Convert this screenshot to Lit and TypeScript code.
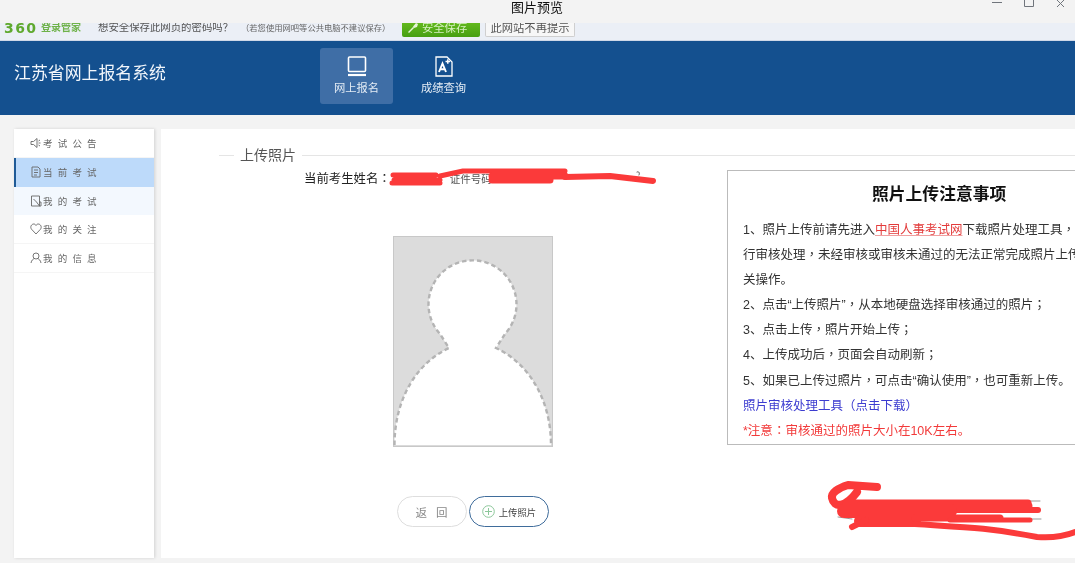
import { LitElement, html, css, svg } from "lit";
import { customElement } from "lit/decorators.js";

const menu = [
  { label: "考试公告", cls: "", icon: svg`<path d="M1 4.500h2.500L7 1.500v9L3.500 7.500H1z"/><path d="M8.500 4l1.500-1M8.500 6h2M8.500 8l1.500 1"/>` },
  { label: "当前考试", cls: "active", icon: svg`<path d="M2 1h6l2 2v8H2z"/><path d="M4 4h4M4 6.500h4M4 9h3"/>` },
  { label: "我的考试", cls: "soft", icon: svg`<path d="M1.500 1h8v10h-8z"/><path d="M3.500 4l3 3M6.500 7l3 4M9 7h2v4H9"/>` },
  { label: "我的关注", cls: "", icon: svg`<path d="M6 11 1.500 6.200C-.2 3.900 1.500 1 3.800 1 5 1 5.600 1.800 6 2.500 6.400 1.800 7 1 8.200 1c2.300 0 4 2.900 2.300 5.200z"/>` },
  { label: "我的信息", cls: "", icon: svg`<circle cx="6" cy="4" r="3"/><path d="M1 11c.5-2.800 2-4 3.500-4.400M11 11c-.5-2.800-2-4-3.500-4.400"/>` },
];

/* The reference sets these full-width marks in the middle of their cell, as the TC face does. */
const pn = (text: string) =>
  text.split(/([，；：])/).map((part) =>
    /^[，；：]$/.test(part) ? html`<span class="mid">${part}</span>` : part
  );

@customElement("app-root")
export class AppRoot extends LitElement {
  static styles = css`
    :host {
      display: block;
      position: relative;
      width: 1075px;
      height: 563px;
      overflow: hidden;
      background: #f3f3f3;
      font-family: "Liberation Sans", "Noto Sans CJK SC", sans-serif;
      color: #333;
      filter: blur(0.35px);
    }
    .titlebar {
      height: 23px;
      background: #f3f3f3;
      position: relative;
      z-index: 1;
      display: flex;
      justify-content: center;
    }
    .titlebar .t {
      font-size: 13px;
      line-height: 15px;
      color: #111;
      margin-left: -1px;
    }
    .winbtns {
      position: absolute;
      right: 9px;
      top: 0;
    }
    .savebar {
      height: 18px;
      box-sizing: border-box;
      background: #ebeff6;
      border-bottom: 1px solid #cfd8e8;
      display: flex;
      align-items: flex-start;
      padding-left: 4px;
      white-space: nowrap;
    }
    .logo360 {
      font-family: "DejaVu Sans", sans-serif;
      font-weight: 700;
      font-size: 14px;
      line-height: 10px;
      letter-spacing: 1.4px;
      color: #5fa92f;
      width: 32px;
      margin-right: 5px;
    }
    .logotxt {
      font-size: 10px;
      line-height: 10px;
      font-weight: 700;
      color: #6fb24a;
      width: 40px;
    }
    .q {
      font-size: 10.4px;
      line-height: 10px;
      color: #555;
      margin-left: 17px;
      width: 135px;
    }
    .hint {
      font-size: 8.3px;
      line-height: 10px;
      color: #666;
      margin-left: 8px;
      width: 161px;
    }
    .btn-save {
      width: 78px;
      height: 14px;
      box-sizing: border-box;
      background: linear-gradient(#62b81c, #479f12);
      border-radius: 0 0 2px 2px;
      color: #d6f0c0;
      font-size: 11.3px;
      line-height: 10px;
      display: flex;
      align-items: flex-start;
      gap: 3px;
      padding-left: 5px;
    }
    .btn-save svg { margin-top: -1px; }
    .btn-never {
      margin-left: 5px;
      width: 90px;
      height: 14px;
      box-sizing: border-box;
      background: #f7f7f7;
      border: 1px solid #cfcfcf;
      border-top: 0;
      border-radius: 0 0 2px 2px;
      color: #555;
      font-size: 11.3px;
      line-height: 10px;
      text-align: center;
    }
    .header {
      height: 74px;
      background: #14508f;
      display: flex;
      align-items: center;
      color: #fff;
    }
    .brand {
      font-size: 16.9px;
      line-height: 20px;
      margin-left: 14px;
      width: 306px;
      margin-top: -8px;
      color: #f2f6fb;
    }
    .navs {
      display: flex;
      gap: 2px;
      margin-top: -4px;
    }
    .nav {
      width: 73px;
      height: 56px;
      border-radius: 3px;
      display: flex;
      flex-direction: column;
      align-items: center;
      gap: 4px;
      padding-top: 8px;
      box-sizing: border-box;
      font-size: 11.3px;
      line-height: 14px;
      color: #e4ecf5;
    }
    .nav.on { background: #3f6ea6; }
    .nav.second { margin-left: 12px; }
    .body {
      display: flex;
      gap: 7px;
      padding: 14px 0 0 14px;
      height: 429px;
    }
    .side {
      width: 140px;
      height: 429px;
      flex: none;
      background: #fff;
      box-shadow: 1px 0 3px rgba(0, 0, 0, 0.14);
    }
    .item {
      height: 28.8px;
      box-sizing: border-box;
      border-bottom: 1px solid #f5f5f5;
      display: flex;
      align-items: center;
      padding-left: 16px;
      color: #666;
      font-size: 9.5px;
      letter-spacing: 5.2px;
      gap: 1px;
    }
    .item svg {
      fill: none;
      stroke: #666;
      stroke-width: 0.9;
      flex: none;
    }
    .item.active {
      background: #bddafa;
      border-left: 2px solid #1f5a96;
      border-bottom: 0;
      padding-left: 14px;
    }
    .item.soft { background: #f3f8fe; border-bottom: 0; }
    .main {
      flex: 1;
      min-width: 0;
      height: 429px;
      background: #fff;
      overflow: hidden;
    }
    .legend {
      display: flex;
      align-items: center;
      margin: 18px 0 0 58px;
      height: 16px;
      gap: 6px;
      font-size: 14px;
      line-height: 16px;
      color: #555;
    }
    .legend i { display: block; height: 1px; background: #e5e5e5; }
    .legend i.a { width: 15px; }
    .legend i.b { flex: 1; }
    .cols {
      display: flex;
      margin-top: 7px;
    }
    .left {
      width: 566px;
      flex: none;
    }
    .who {
      display: flex;
      white-space: nowrap;
      padding-left: 143px;
      font-size: 12.4px;
      line-height: 16px;
      color: #222;
      margin-top: 1px;
    }
    .who .cert { margin-left: 59px; font-size: 10.5px; color: #555; }
    .photo {
      display: block;
      margin: 49px 0 0 232px;
      width: 160px;
      height: 211px;
    }
    .btns {
      display: flex;
      gap: 2px;
      margin: 49px 0 0 236px;
    }
    .btn {
      height: 31px;
      box-sizing: border-box;
      border-radius: 16px;
      background: #fff;
      display: flex;
      align-items: center;
      justify-content: center;
    }
    .btn.back {
      width: 70px;
      border: 1px solid #dedede;
      color: #888;
      font-size: 11.5px;
      letter-spacing: 9px;
      padding-left: 8px;
    }
    .btn.up {
      width: 80px;
      border: 1px solid #3f6c9b;
      color: #444;
      font-size: 9.4px;
      gap: 4px;
    }
    .notice {
      flex: none;
      width: 420px;
      height: 275px;
      box-sizing: border-box;
      border: 1px solid #bbb;
      padding: 12px 0 0 15px;
      font-size: 12.5px;
      line-height: 25.1px;
      color: #333;
      white-space: nowrap;
    }
    .notice h3 {
      margin: 0 0 11px;
      font-size: 16.8px;
      line-height: 24px;
      font-weight: 700;
      color: #111;
      padding-left: 129px;
    }
    .notice p { margin: 0; }
    .mid { font-family: "Noto Sans CJK TC", sans-serif; line-height: 1; }
    .link { color: #e33b3b; text-decoration: underline; text-decoration-color: #f0a0a0; }
    .blue { color: #3c3cd0; }
    .red { color: #f23a3a; }
    .ink {
      position: absolute;
      inset: 0;
      z-index: 2;
      pointer-events: none;
    }
  `;

  render() {
    return html`
      <div class="titlebar">
        <span class="t">图片预览</span>
        <svg class="winbtns" width="74" height="8" viewBox="0 0 74 8" fill="none" stroke="#70757c" stroke-width="1">
          <path d="M0 2.500h10M32.500 0v6.500h9V0M65 0l7 7M72 0l-7 7" />
        </svg>
      </div>
      <div class="savebar">
        <span class="logo360">360</span>
        <span class="logotxt">登录管家</span>
        <span class="q">想安全保存此网页的密码吗？</span>
        <span class="hint">（若您使用网吧等公共电脑不建议保存）</span>
        <span class="btn-save">
          <svg width="12" height="11" viewBox="0 0 12 11" fill="#e6f5d8"><path d="M1 10l5-5 1 1-5 5zM6 4.500 9 1l2 1-1 3-3 1z"/></svg>
          安全保存
        </span>
        <span class="btn-never">此网站不再提示</span>
      </div>
      <div class="header">
        <div class="brand">江苏省网上报名系统</div>
        <div class="navs">
          <div class="nav on">
            <svg width="20" height="21" viewBox="0 0 20 21" fill="none" stroke="#fff" stroke-width="1.600">
              <rect x="1.500" y="1" width="17" height="14.500" rx="1" />
              <path d="M1 19h18" stroke-width="2.200" />
            </svg>
            网上报名
          </div>
          <div class="nav second">
            <svg width="20" height="21" viewBox="0 0 20 21" fill="none" stroke="#fff" stroke-width="1.300">
              <path d="M2 1h11l5 5v14H2z" />
              <path d="M5 16 8.500 7.500 12 16M6.200 13.200h4.600" stroke-width="1.900" />
              <path d="M11.500 5.500h4.500M13.800 3.300v4.500" stroke-width="1.500" />
            </svg>
            成绩查询
          </div>
        </div>
      </div>
      <div class="body">
        <nav class="side">
          ${menu.map(
            (m) => html`<div class="item ${m.cls}">
              <svg width="12" height="12" viewBox="0 0 12 12">${m.icon}</svg>
              <span>${m.label}</span>
            </div>`
          )}
        </nav>
        <section class="main">
          <div class="legend"><i class="a"></i><span>上传照片</span><i class="b"></i></div>
          <div class="cols">
            <div class="left">
              <div class="who"><span>当前考生姓名<span class="mid">：</span></span><span class="cert">证件号码：</span></div>
              <svg class="photo" viewBox="0 0 160 211">
                <rect x="0.500" y="0.500" width="159" height="210" fill="#dcdcdc" stroke="#c8c8c8" />
                <path d="M1.500 209.500C1.500 165 22 128 56 112L47 98A44 44 0 1 1 112 98L103 112C137 128 158 165 158 209.500Z" fill="#fff" />
                <path d="M1.500 209C1.500 165 22 128 56 112L47 98A44 44 0 1 1 112 98L103 112C137 128 158 165 158 209" fill="none" stroke="#b4b4b4" stroke-width="2.400" stroke-dasharray="4.500 3" />
                <path d="M1 210h158" stroke="#c8c8c8" />
              </svg>
              <div class="btns">
                <div class="btn back">返回</div>
                <div class="btn up">
                  <svg width="13" height="13" viewBox="0 0 13 13" fill="none" stroke="#8cc79a">
                    <circle cx="6.500" cy="6.500" r="5.800" /><path d="M6.500 3v7M3 6.500h7" />
                  </svg>
                  上传照片
                </div>
              </div>
            </div>
            <div class="notice">
              <h3>照片上传注意事项</h3>
              <p>1、照片上传前请先进入<span class="link">中国人事考试网</span>${pn("下载照片处理工具，")}</p>
              <p>${pn("行审核处理，未经审核或审核未通过的无法正常完成照片上传")}</p>
              <p>关操作。</p>
              <p>${pn("2、点击“上传照片”，从本地硬盘选择审核通过的照片；")}</p>
              <p>${pn("3、点击上传，照片开始上传；")}</p>
              <p>${pn("4、上传成功后，页面会自动刷新；")}</p>
              <p>${pn("5、如果已上传过照片，可点击“确认使用”，也可重新上传。")}</p>
              <p class="blue">${pn("照片审核处理工具（点击下载）")}</p>
              <p class="red">${pn("*注意：审核通过的照片大小在10K左右。")}</p>
            </div>
          </div>
        </section>
      </div>
      <svg class="ink" width="1075" height="563" viewBox="0 0 1075 563" fill="none" stroke-linecap="round" stroke-linejoin="round">
        <path d="M838 517 852 519M1020 519H1041M1030 501H1040" stroke="#999" />
        <path d="M637 172c2-1 3 1 2 3" stroke="#555" />
        <g stroke="#fb3a3a">
          <path d="M393 175H436M394 180H440M392 183H440" stroke-width="5" />
          <path d="M440 176 463 171H565" stroke-width="5" />
          <path d="M492 176H565M492 180H550" stroke-width="7" />
          <path d="M565 177 610 176 653 181" stroke-width="6" />
          <path d="M877 487 848 485C838 488 831 493 832 498 834 508 845 508 857 492" stroke-width="8" />
          <path d="M846 503H1028" stroke-width="7" />
          <path d="M860 506H1028" stroke-width="9" />
          <path d="M858 510H1038" stroke-width="6" />
          <path d="M844 511H950" stroke-width="14" />
          <path d="M860 521H915" stroke-width="12" />
          <path d="M915 518H1000" stroke-width="7" />
          <path d="M950 520H1030" stroke-width="5" />
          <path d="M852 527 866 520" stroke-width="6" />
          <path d="M915 524C960 527 985 527 1037 537 1050 538 1065 536 1075 532" stroke-width="6" />
        </g>
      </svg>
    `;
  }
}
